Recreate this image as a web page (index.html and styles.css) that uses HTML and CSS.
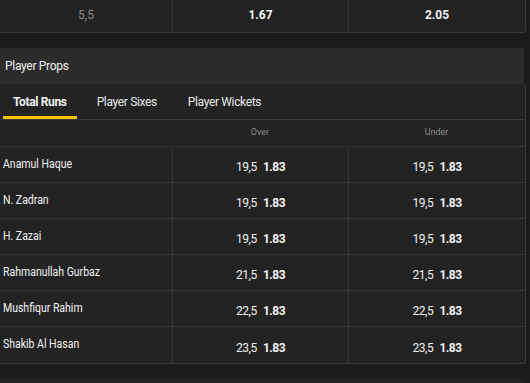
FILE: index.html
```
<!DOCTYPE html>
<html lang="en">
<head>
	<meta charset="UTF-8">
	<meta name="viewport" content="width=device-width, initial-scale=1.0">
	<title>Player Props</title>
	<link rel="stylesheet" href="styles.css">
</head>
<body>
	<div class="market">
		<div class="mk-cell mk-line">5,5</div>
		<div class="mk-cell mk-odd">1.67</div>
		<div class="mk-cell mk-odd">2.05</div>
	</div>

	<div class="props">
		<div class="props-h">Player Props</div>
		<div class="props-body">
			<ul class="tabs">
				<li class="tab selected">Total Runs</li>
				<li class="tab">Player Sixes</li>
				<li class="tab">Player Wickets</li>
			</ul>
			<div class="row row-head">
				<div class="c-name"></div>
				<div class="c-val">Over</div>
				<div class="c-val">Under</div>
			</div>
			<div class="row">
				<div class="c-name"><span class="nm">Anamul Haque</span></div>
				<div class="c-val"><span class="ln">19,5</span><b>1.83</b></div>
				<div class="c-val"><span class="ln">19,5</span><b>1.83</b></div>
			</div>
			<div class="row">
				<div class="c-name"><span class="nm">N. Zadran</span></div>
				<div class="c-val"><span class="ln">19,5</span><b>1.83</b></div>
				<div class="c-val"><span class="ln">19,5</span><b>1.83</b></div>
			</div>
			<div class="row">
				<div class="c-name"><span class="nm">H. Zazai</span></div>
				<div class="c-val"><span class="ln">19,5</span><b>1.83</b></div>
				<div class="c-val"><span class="ln">19,5</span><b>1.83</b></div>
			</div>
			<div class="row">
				<div class="c-name"><span class="nm">Rahmanullah Gurbaz</span></div>
				<div class="c-val"><span class="ln">21,5</span><b>1.83</b></div>
				<div class="c-val"><span class="ln">21,5</span><b>1.83</b></div>
			</div>
			<div class="row">
				<div class="c-name"><span class="nm">Mushfiqur Rahim</span></div>
				<div class="c-val"><span class="ln">22,5</span><b>1.83</b></div>
				<div class="c-val"><span class="ln">22,5</span><b>1.83</b></div>
			</div>
			<div class="row">
				<div class="c-name"><span class="nm">Shakib Al Hasan</span></div>
				<div class="c-val"><span class="ln">23,5</span><b>1.83</b></div>
				<div class="c-val"><span class="ln">23,5</span><b>1.83</b></div>
			</div>
		</div>
	</div>

	<div class="next"></div>
</body>
</html>
```
FILE: styles.css
```
body {
  margin: 0;
  background: #1b1b1b;
  font-family: Roboto, "Liberation Sans", sans-serif;
  color: #eee;
  overflow: hidden;
}

.market {
  display: grid;
  grid-template-columns: 172px 176px 177px;
  width: 525px;
  height: 32px;
  background: #232323;
  border-right: 1px solid #383838;
  border-bottom: 1px solid #383838;
  border-radius: 0 0 3px 0;
}
.mk-cell {
  display: flex;
  justify-content: center;
  align-items: center;
  padding-bottom: 3px;
  font-size: 12px;
  border-left: 1px solid #383838;
}
.mk-cell:first-child {
  border-left: none;
}
.mk-line {
  color: #8a8a8a;
}
.mk-odd {
  font-weight: bold;
  color: #f2f2f2;
}

.props {
  margin-top: 15px;
  width: 526px;
}
.props-h {
  height: 36px;
  line-height: 37px;
  padding-left: 5px;
  background: #2c2c2c;
  border-radius: 3px 3px 0 0;
  font-size: 12px;
  color: #f0f0f0;
  letter-spacing: -0.3px;
  width: 519px;
}
.props-body {
  background: #232323;
  border-right: 1px solid #383838;
  border-bottom: 1px solid #383838;
  border-radius: 0 0 3px 0;
  width: 525px;
}

.tabs {
  display: flex;
  margin: 0;
  padding: 0 0 0 3px;
  list-style: none;
  height: 36px;
  border-bottom: 1px solid #3a3a3a;
  box-sizing: border-box;
}
.tab {
  padding: 0 10px;
  margin-right: 11px;
  display: flex;
  align-items: center;
  font-size: 12px;
  letter-spacing: -0.35px;
  color: #e8e8e8;
  border-bottom: 3px solid transparent;
  padding-top: 3px;
}
.tab.selected {
  font-weight: bold;
  border-bottom-color: #f5c400;
  color: #f4f4f4;
  margin-right: 10px;
}

.row {
  display: grid;
  grid-template-columns: 172px 176px 177px;
  height: 36px;
  border-bottom: 1px solid #363636;
  box-sizing: border-box;
}
.row:last-child {
  border-bottom: none;
}
.row-head {
  height: 27px;
}
.row-head .c-val {
  font-size: 9px;
  color: #8c8c8c;
  padding-top: 0;
  align-items: center;
  border-left: none;
  padding-bottom: 2px;
}
.c-name {
  padding-left: 3px;
  padding-top: 9px;
  font-size: 12.5px;
  color: #f2f2f2;
}
.nm {
  display: inline-block;
  transform: scaleX(0.84);
  transform-origin: left;
  white-space: nowrap;
}
.c-val {
  display: flex;
  justify-content: center;
  align-items: center;
  padding-top: 5px;
  gap: 6px;
  font-size: 12px;
  border-left: 1px solid #363636;
  color: #f0f0f0;
}
.c-val .ln {
  letter-spacing: -0.4px;
}
.c-val b {
  font-weight: bold;
  font-size: 12px;
  letter-spacing: -0.5px;
}

.next {
  margin-top: 14px;
  height: 20px;
  width: 525px;
  background: #232323;
  border-radius: 3px 3px 0 0;
}
```
